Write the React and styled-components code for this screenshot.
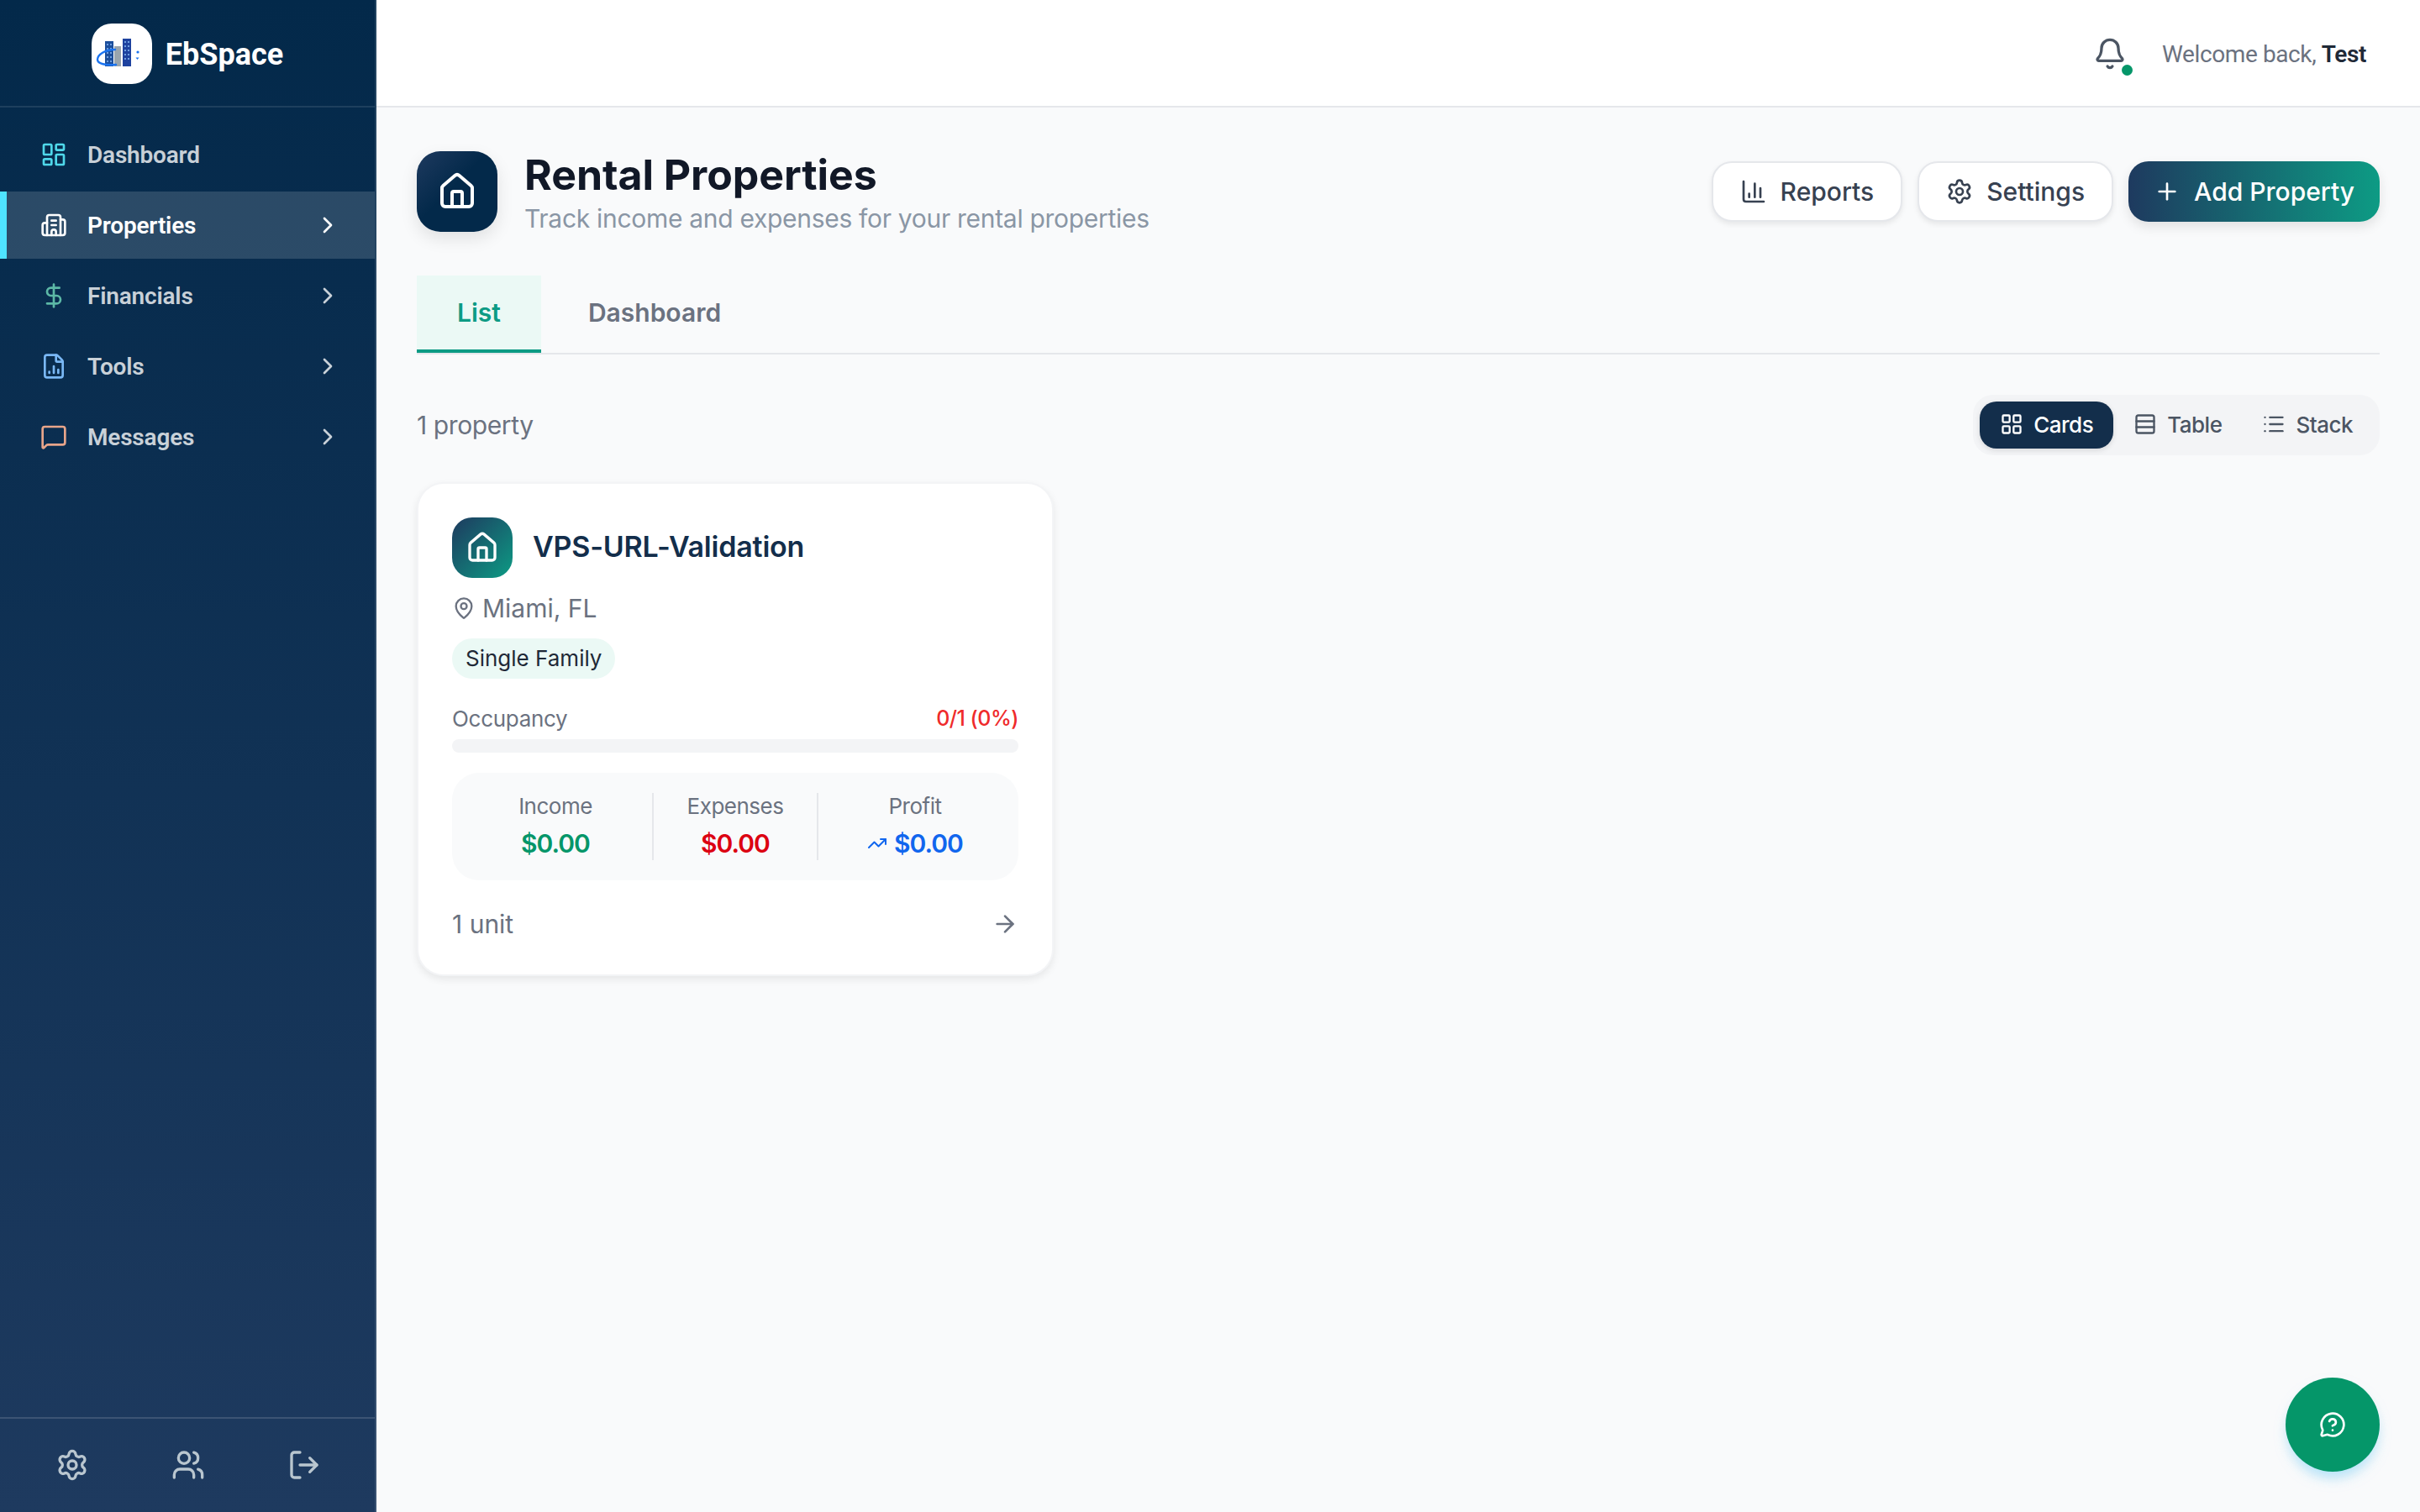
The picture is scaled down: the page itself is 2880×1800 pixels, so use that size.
import React from "react";
import styled, { createGlobalStyle } from "styled-components";
import {
  LayoutDashboard, Building2, DollarSign, FileChartColumn, MessageSquare, ChevronRight,
  Settings, Users, LogOut, Bell, House, ChartColumn, Plus, LayoutGrid, Rows3, List,
  MapPin, TrendingUp, ArrowRight, MessageCircleQuestion,
} from "lucide-react";

const Global = createGlobalStyle`
  html, body { margin: 0; padding: 0; background: #f9fafb; }
  * { box-sizing: border-box; }
  body { font-family: Inter, "Liberation Sans", sans-serif; }
`;

const SIDE = `Roboto, "Noto Sans", sans-serif`;
const BODY = `Inter, "Liberation Sans", sans-serif`;

const Shell = styled.div`display: flex; min-height: 100vh;`;
const Sidebar = styled.aside`
  width: 448px; flex: none; display: flex; flex-direction: column; min-height: 1800px;
  background: linear-gradient(180deg, #03294a 0%, #1e3a5f 100%);
  border-right: 2px solid rgba(255,255,255,.12);
  font-family: ${SIDE};
`;
const Brand = styled.div`
  height: 128px; display: flex; align-items: center; justify-content: center; gap: 16px;
  border-bottom: 2px solid rgba(255,255,255,.1); padding-top: 2px;
`;
const LogoBox = styled.div`
  width: 72px; height: 72px; border-radius: 24px; background: #fff; display: flex;
`;
const BrandName = styled.span`font-size: 36px; font-weight: 700; color: #fff; padding-top: 2px;`;
const Nav = styled.nav`display: flex; flex-direction: column; gap: 4px; padding-top: 16px; flex: 1;`;
const NavItem = styled.div`
  height: 80px; display: flex; align-items: center; gap: 24px; padding: 0 40px;
  border-left: 8px solid ${p => (p.$active ? "#4fe3ff" : "transparent")};
  background: ${p => (p.$active ? "rgba(255,255,255,.15)" : "transparent")};
  color: ${p => (p.$active ? "#fff" : "rgba(255,255,255,.78)")};
  font-size: 28px; font-weight: 600; letter-spacing: -0.2px;
`;
const NavIcon = styled.span`display: flex; color: ${p => p.$c};`;
const NavLabel = styled.span`flex: 1;`;
const SideFoot = styled.div`
  height: 113px; border-top: 2px solid rgba(255,255,255,.14); display: flex;
  align-items: center; justify-content: center; gap: 98px; color: #b9c6cf; padding: 0 0 2px 2px;
`;

const Main = styled.main`flex: 1; min-width: 0; display: flex; flex-direction: column; font-family: ${BODY};`;
const TopBar = styled.header`
  height: 128px; background: #fff; border-bottom: 2px solid #e5e7eb; display: flex;
  align-items: center; justify-content: flex-end; gap: 42px; padding: 2px 64px 0 0;
`;
const BellWrap = styled.div`position: relative; display: flex; color: #4b5563;`;
const Dot = styled.span`
  position: absolute; right: -7px; bottom: -6px; width: 13px; height: 13px;
  border-radius: 50%; background: #059669;
`;
const Welcome = styled.div`font-family: ${SIDE}; font-size: 28px; color: #6b7280; letter-spacing: -0.4px;`;
const Strong = styled.span`font-weight: 600; color: #1f2937;`;

const Content = styled.div`padding: 52px 48px 0; display: flex; flex-direction: column;`;
const PageHead = styled.div`display: flex; align-items: center; justify-content: space-between; height: 96px;`;
const TitleGroup = styled.div`display: flex; align-items: center; gap: 32px;`;
const TitleIcon = styled.div`
  width: 96px; height: 96px; border-radius: 28px; display: flex; align-items: center;
  justify-content: center; color: #fff;
  background: linear-gradient(135deg, #1e3a5f 0%, #03294a 45%);
  box-shadow: 0 8px 20px rgba(0,0,0,.1);
`;
const TitleText = styled.div`display: flex; flex-direction: column; height: 96px;`;
const Title = styled.h1`
  margin: -2px 0 0; font-size: 50px; line-height: 60px; font-weight: 700; color: #111827; letter-spacing: -0.05px;
`;
const Sub = styled.p`margin: 2px 0 0; font-size: 30px; line-height: 40px; color: #8a96a5; letter-spacing: -0.3px;`;
const Actions = styled.div`display: flex; gap: 18px; align-items: center;`;
const Btn = styled.button`
  height: 72px; border-radius: 24px; font-family: inherit; font-size: 30px; font-weight: 500;
  display: flex; align-items: center; gap: 16px; padding: 0 ${p => (p.$primary ? 30 : 32)}px; cursor: pointer;
  color: ${p => (p.$primary ? "#fff" : "#374151")};
  border: ${p => (p.$primary ? "none" : "2px solid #e5e7eb")};
  background: ${p => (p.$primary ? "linear-gradient(90deg, #1e3a5f 0%, #0d9b84 100%)" : "#fff")};
  box-shadow: ${p => (p.$primary ? "0 6px 14px rgba(0,0,0,.1)" : "0 3px 6px rgba(0,0,0,.08)")};
`;
const Tabs = styled.div`display: flex; gap: 8px; margin-top: 52px; border-bottom: 2px solid #e5e7eb;`;
const Tab = styled.div`
  height: 92px; padding: 0 48px; display: flex; align-items: center; font-size: 30px; font-weight: 600;
  color: ${p => (p.$active ? "#0d9b84" : "#6b7280")};
  background: ${p => (p.$active ? "#ebf9f5" : "transparent")};
  border-bottom: 4px solid ${p => (p.$active ? "#0d9b84" : "transparent")};
`;
const ListHead = styled.div`display: flex; align-items: center; justify-content: space-between; margin-top: 48px;`;
const Count = styled.span`font-size: 30px; color: #6b7280; letter-spacing: -0.4px;`;
const Toggle = styled.div`
  height: 72px; padding: 8px; background: #f3f4f6; border-radius: 24px; display: flex; align-items: center;
`;
const ToggleBtn = styled.div`
  height: 56px; padding: 0 24px 2px; border-radius: 20px; display: flex; align-items: center; gap: 12px;
  font-size: 26px; font-weight: 500; letter-spacing: -0.5px;
  color: ${p => (p.$active ? "#fff" : "#4b5563")};
  background: ${p => (p.$active ? "#132e4b" : "transparent")};
  box-shadow: ${p => (p.$active ? "0 2px 6px rgba(0,0,0,.12)" : "none")};
`;
const CardGrid = styled.div`display: grid; grid-template-columns: repeat(3, 1fr); gap: 32px; margin-top: 32px;`;
const Card = styled.article`
  background: #fff; border: 2px solid #f3f4f6; border-radius: 32px; padding: 40px;
  box-shadow: 0 4px 10px rgba(0,0,0,.08);
`;
const CardHead = styled.div`display: flex; align-items: center; gap: 24px;`;
const CardIcon = styled.div`
  width: 72px; height: 72px; border-radius: 24px; display: flex; align-items: center; justify-content: center;
  color: #fff; background: linear-gradient(135deg, #1e3a5f 0%, #0d9b84 100%);
`;
const CardTitle = styled.h3`
  margin: 0; padding-bottom: 3px; font-size: 34px; font-weight: 600; color: #132e4b; letter-spacing: -0.2px;
`;
const Loc = styled.div`
  margin-top: 16px; height: 40px; display: flex; align-items: center; gap: 8px; font-size: 30px; color: #6b7280;
`;
const Badge = styled.span`
  display: inline-flex; align-items: center; margin-top: 16px; height: 48px; padding: 0 16px 2px;
  border-radius: 24px; background: #ebf9f5; font-size: 26px; color: #1f2937;
`;
const OccRow = styled.div`
  margin-top: 30px; height: 36px; padding-bottom: 2px; display: flex; align-items: center; justify-content: space-between;
  font-size: 26px; color: #6b7280; letter-spacing: -0.3px;
`;
const OccVal = styled.span`font-weight: 500; font-size: 25px; letter-spacing: -0.5px; color: #ef2b2b;`;
const Bar = styled.div`margin-top: 6px; height: 16px; border-radius: 8px; background: #f3f4f6;`;
const Stats = styled.div`
  margin-top: 24px; height: 128px; padding: 24px 8px; background: #f9fafb; border-radius: 32px;
  display: grid; grid-template-columns: 230px 198px 230px;
`;
const Stat = styled.div`
  height: 80px; display: flex; flex-direction: column; align-items: center; justify-content: space-between;
  ${p => p.$mid && "border-left: 2px solid #e5e7eb; border-right: 2px solid #e5e7eb;"}
`;
const StatLabel = styled.span`font-size: 26px; line-height: 32px; color: #6b7280; letter-spacing: -0.5px;`;
const StatValue = styled.span`
  font-size: 30px; line-height: 40px; font-weight: 600; color: ${p => p.$c}; display: flex; align-items: center; gap: 8px; letter-spacing: -1px;
`;
const CardFoot = styled.div`
  margin-top: 32px; height: 40px; display: flex; align-items: center; justify-content: space-between;
  font-size: 30px; color: #6b7280;
`;
const Fab = styled.button`
  position: fixed; right: 48px; bottom: 48px; width: 112px; height: 112px; border-radius: 50%;
  border: none; background: #059669; color: #fff; display: flex; align-items: center; justify-content: center;
  box-shadow: 0 10px 15px -3px rgba(125,211,252,.55), 0 6px 24px rgba(0,0,0,.03);
`;

const Logo = () => (
  <svg width="72" height="72" viewBox="0 0 72 72" fill="none">
    <rect x="16" y="21" width="10" height="30" fill="#1d4f9c" />
    <rect x="27" y="27" width="8" height="24" fill="#9aa5ad" />
    <rect x="37" y="18" width="10" height="33" fill="#1e429f" />
    {[24, 29, 34, 39, 44].map(y => (
      <g key={y} fill="#6f9fe0">
        <rect x="18" y={y} width="2" height="2" />
        <rect x="22" y={y} width="2" height="2" />
        <rect x="39" y={y - 3} width="2" height="2" />
        <rect x="43" y={y - 3} width="2" height="2" />
      </g>
    ))}
    <path d="M28 31C16 31 7 37 7 43c0 5 10 7 22 6" stroke="#1a73f0" strokeWidth="2.4" strokeLinecap="round" />
    <circle cx="55" cy="34" r="1.6" fill="#1a73f0" />
    <path d="M52.5 40.5l4 0-2 2.6z" fill="#1a73f0" />
  </svg>
);

const nav = [
  { label: "Dashboard", Icon: LayoutDashboard, c: "#4fd8ea" },
  { label: "Properties", Icon: Building2, c: "#fff", active: true, chevron: true },
  { label: "Financials", Icon: DollarSign, c: "#5cb8a6", chevron: true },
  { label: "Tools", Icon: FileChartColumn, c: "#7ab8f5", chevron: true },
  { label: "Messages", Icon: MessageSquare, c: "#e8a58a", chevron: true },
];

export default function App() {
  return (
    <Shell>
      <Global />
      <Sidebar>
        <Brand>
          <LogoBox><Logo /></LogoBox>
          <BrandName>EbSpace</BrandName>
        </Brand>
        <Nav>
          {nav.map(({ label, Icon, c, active, chevron }) => (
            <NavItem key={label} $active={active}>
              <NavIcon $c={c}><Icon size={32} strokeWidth={2} /></NavIcon>
              <NavLabel>{label}</NavLabel>
              {chevron && <ChevronRight size={32} />}
            </NavItem>
          ))}
        </Nav>
        <SideFoot>
          <Settings size={40} strokeWidth={2} />
          <Users size={40} strokeWidth={2} />
          <LogOut size={40} strokeWidth={2} />
        </SideFoot>
      </Sidebar>
      <Main>
        <TopBar>
          <BellWrap>
            <Bell size={40} strokeWidth={2} />
            <Dot />
          </BellWrap>
          <Welcome>Welcome back, <Strong>Test</Strong></Welcome>
        </TopBar>
        <Content>
          <PageHead>
            <TitleGroup>
              <TitleIcon><House size={48} strokeWidth={2} /></TitleIcon>
              <TitleText>
                <Title>Rental Properties</Title>
                <Sub>Track income and expenses for your rental properties</Sub>
              </TitleText>
            </TitleGroup>
            <Actions>
              <Btn><ChartColumn size={32} />Reports</Btn>
              <Btn><Settings size={32} />Settings</Btn>
              <Btn $primary><Plus size={32} />Add Property</Btn>
            </Actions>
          </PageHead>
          <Tabs>
            <Tab $active>List</Tab>
            <Tab>Dashboard</Tab>
          </Tabs>
          <ListHead>
            <Count>1 property</Count>
            <Toggle>
              <ToggleBtn $active><LayoutGrid size={28} />Cards</ToggleBtn>
              <ToggleBtn><Rows3 size={28} />Table</ToggleBtn>
              <ToggleBtn><List size={28} />Stack</ToggleBtn>
            </Toggle>
          </ListHead>
          <CardGrid>
            <Card>
              <CardHead>
                <CardIcon><House size={40} strokeWidth={2} /></CardIcon>
                <CardTitle>VPS-URL-Validation</CardTitle>
              </CardHead>
              <Loc><MapPin size={28} />Miami, FL</Loc>
              <Badge>Single Family</Badge>
              <OccRow><span>Occupancy</span><OccVal>0/1 (0%)</OccVal></OccRow>
              <Bar />
              <Stats>
                <Stat><StatLabel>Income</StatLabel><StatValue $c="#059669">$0.00</StatValue></Stat>
                <Stat $mid><StatLabel>Expenses</StatLabel><StatValue $c="#dc0011">$0.00</StatValue></Stat>
                <Stat><StatLabel>Profit</StatLabel><StatValue $c="#1166ee"><TrendingUp size={24} />$0.00</StatValue></Stat>
              </Stats>
              <CardFoot><span>1 unit</span><ArrowRight size={32} /></CardFoot>
            </Card>
          </CardGrid>
        </Content>
      </Main>
      <Fab><MessageCircleQuestion size={32} /></Fab>
    </Shell>
  );
}
